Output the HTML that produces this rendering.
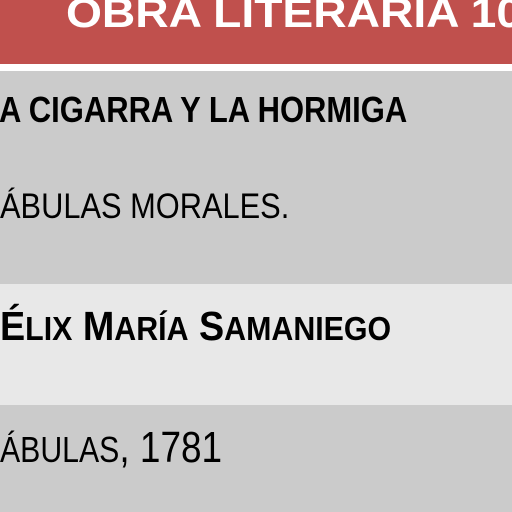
<!DOCTYPE html>
<html><head><meta charset="utf-8"><style>
html,body{margin:0;padding:0;width:512px;height:512px;overflow:hidden;background:#fff;font-family:"Liberation Sans",sans-serif}
.b{position:absolute;left:0;width:512px}
.t{position:absolute;white-space:nowrap;transform-origin:0 0;color:#000;line-height:1}
</style></head><body>
<div class="b" style="top:0;height:64px;background:#c0504d"></div>
<div class="b" style="top:64px;height:7px;background:#fff"></div>
<div class="b" style="top:71px;height:213px;background:#cbcbcb"></div>
<div class="b" style="top:284px;height:121px;background:#e8e8e8"></div>
<div class="b" style="top:405px;height:107px;background:#cbcbcb"></div>

<div class="t" style="left:66px;top:-8px;font-size:42px;font-weight:bold;color:#fff;transform:scaleX(1.1)">OBRA LITERARIA 10</div>
<div class="t" style="left:-1px;top:92px;font-size:36px;font-weight:bold;transform:scaleX(0.86)">A CIGARRA Y LA HORMIGA</div>
<div class="t" style="left:0px;top:189px;font-size:35px;transform:scaleX(0.88)">ÁBULAS MORALES.</div>
<div class="t" style="left:0px;top:306px;font-size:41px;font-weight:bold;transform:scaleX(0.92)">É<span style="font-size:33px">LIX</span> M<span style="font-size:33px">ARÍA</span> S<span style="font-size:33px">AMANIEGO</span></div>
<div class="t" style="left:0px;top:426px;font-size:44px;transform:scaleX(0.84)"><span style="font-size:36px">ÁBULAS</span>, 1781</div>
</body></html>
